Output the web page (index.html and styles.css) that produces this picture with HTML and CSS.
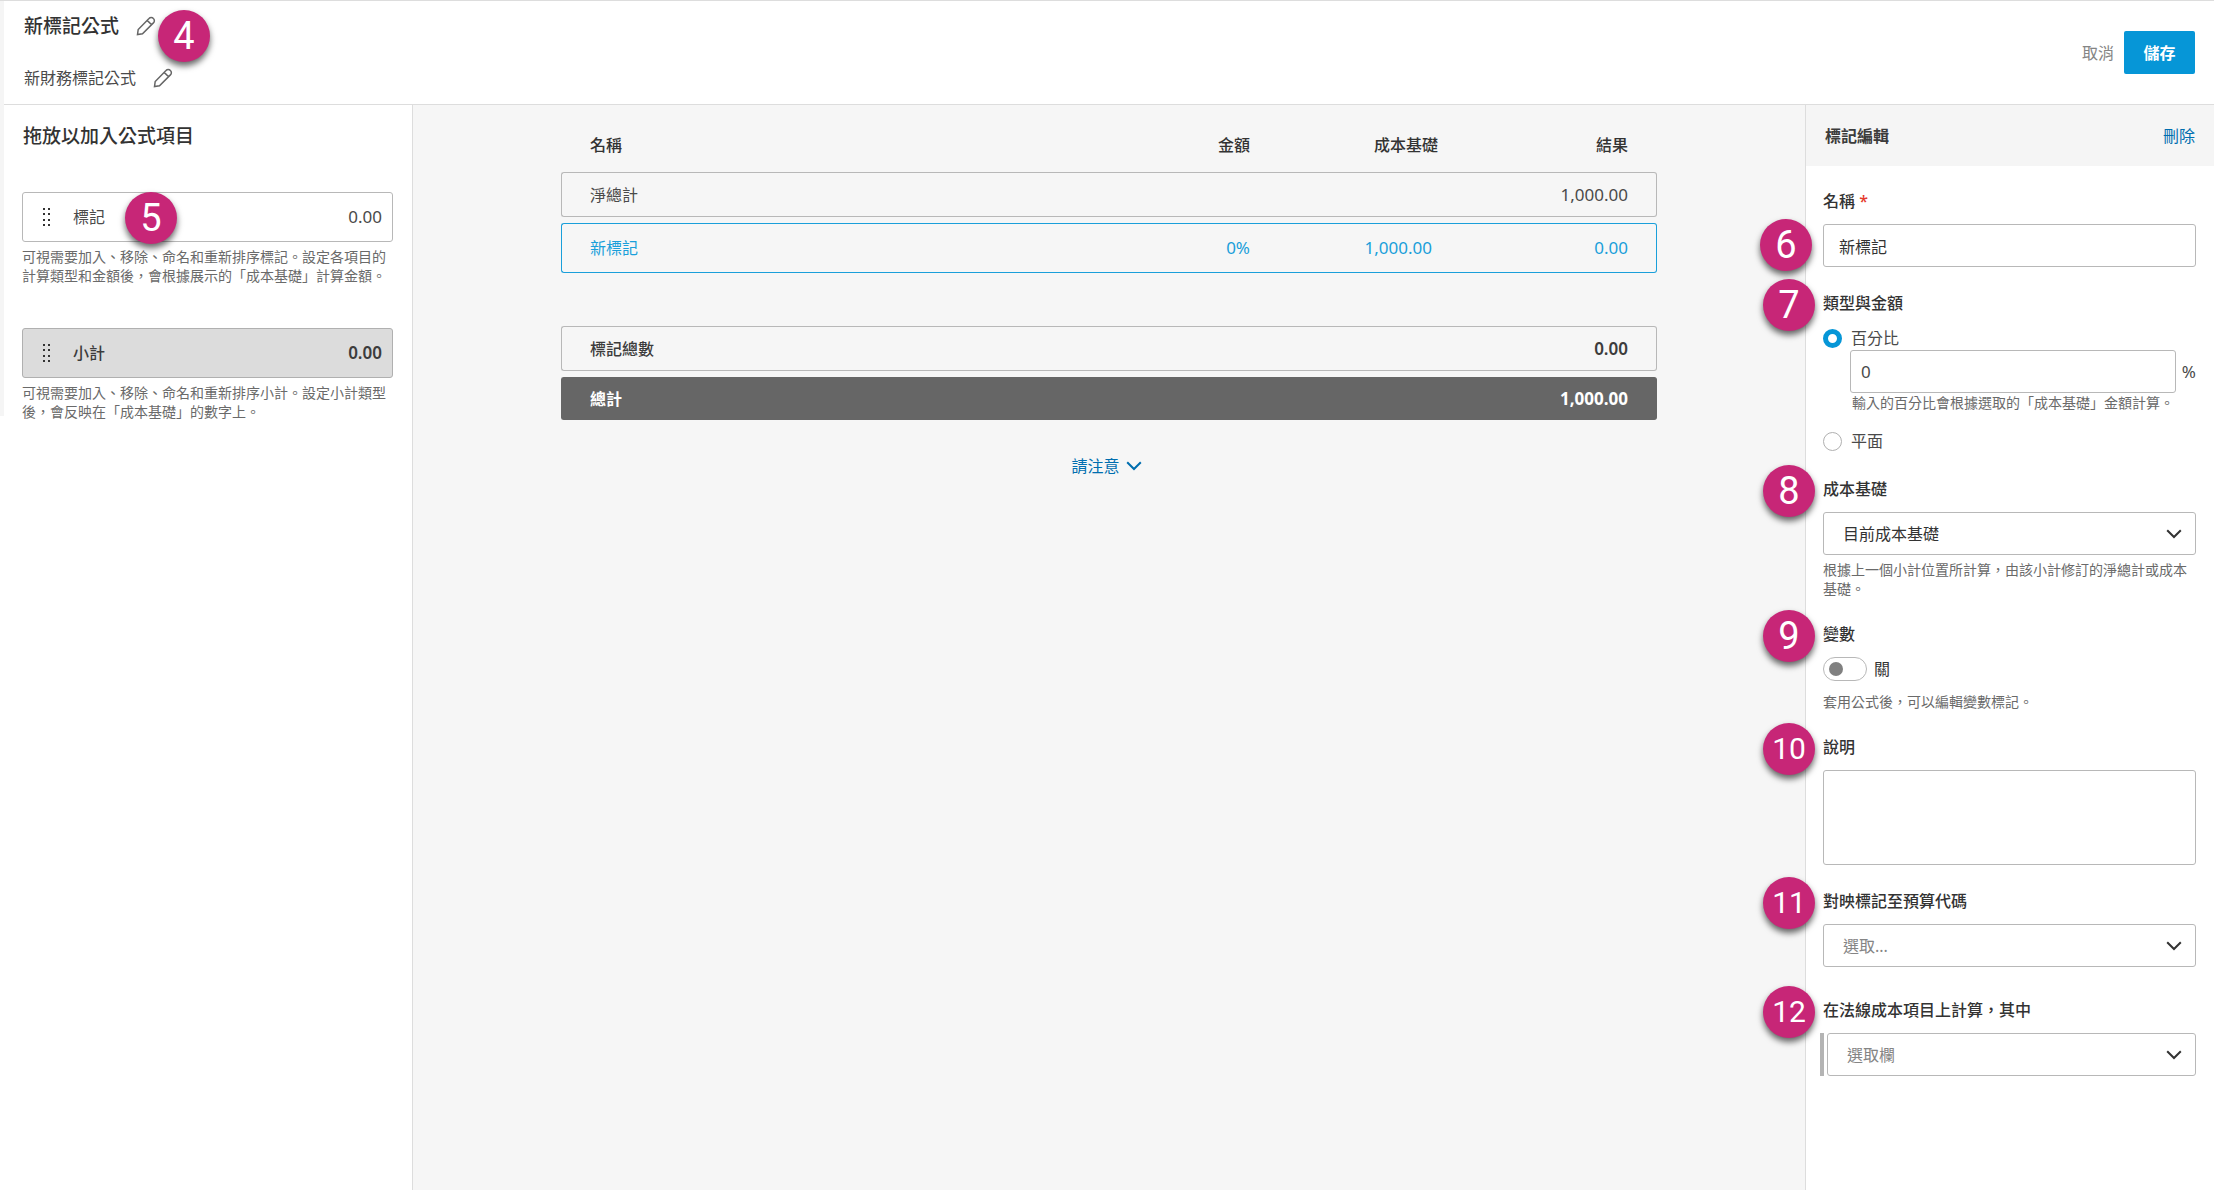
FILE: index.html
```html
<!DOCTYPE html>
<html lang="zh-Hant">
<head>
    <meta charset="UTF-8">
    <meta name="viewport" content="width=device-width, initial-scale=1.0">
    <title>新標記公式</title>
    <link rel="stylesheet" href="styles.css">
</head>
<body>
    <svg class="sprite" width="0" height="0" aria-hidden="true">
        <symbol id="icon-pencil" viewBox="0 0 20 20">
            <path d="M1.500 18.500 2.200 13.500 13 2.500a3 3 0 0 1 4.400 0 3 3 0 0 1 0 4.400L6.500 17.800ZM11.200 4.400l4.400 4.400" />
        </symbol>
        <symbol id="icon-chevron" viewBox="0 0 16 10">
            <path d="M1.200 1.200 8 8l6.800-6.800" />
        </symbol>
        <symbol id="icon-grip" viewBox="0 0 10 20">
            <path d="M1 1h2v2H1zM6 1h2v2H6zM1 6h2v2H1zM6 6h2v2H6zM1 12h2v2H1zM6 12h2v2H6zM1 17h2v2H1zM6 17h2v2H6z" />
        </symbol>
    </svg>

    <header class="page-header">
        <div class="titles">
            <div class="title-row">
                <h1>新標記公式</h1>
                <button type="button" class="icon-btn" aria-label="編輯名稱"><svg><use href="#icon-pencil" /></svg></button>
                <span class="badge badge-title">4</span>
            </div>
            <div class="title-row">
                <p>新財務標記公式</p>
                <button type="button" class="icon-btn" aria-label="編輯說明"><svg><use href="#icon-pencil" /></svg></button>
            </div>
        </div>
        <div class="actions">
            <button type="button" class="cancel-btn">取消</button>
            <button type="button" class="save-btn">儲存</button>
        </div>
    </header>

    <div class="columns">
        <aside class="items">
            <h2>拖放以加入公式項目</h2>
            <div class="item">
                <div class="item-card">
                    <svg class="grip"><use href="#icon-grip" /></svg>
                    <span>標記</span>
                    <span class="number">0.00</span>
                    <span class="badge badge-item">5</span>
                </div>
                <p class="help">可視需要加入、移除、命名和重新排序標記。設定各項目的計算類型和金額後，會根據展示的「成本基礎」計算金額。</p>
            </div>
            <div class="item">
                <div class="item-card subtotal">
                    <svg class="grip"><use href="#icon-grip" /></svg>
                    <span>小計</span>
                    <span class="number">0.00</span>
                </div>
                <p class="help">可視需要加入、移除、命名和重新排序小計。設定小計類型後，會反映在「成本基礎」的數字上。</p>
            </div>
        </aside>

        <main class="formula">
            <table>
                <thead>
                    <tr>
                        <th>名稱</th>
                        <th class="amount">金額</th>
                        <th class="basis">成本基礎</th>
                        <th class="result">結果</th>
                    </tr>
                </thead>
                <tbody>
                    <tr>
                        <td>淨總計</td>
                        <td></td>
                        <td></td>
                        <td class="number">1,000.00</td>
                    </tr>
                    <tr class="selected">
                        <td>新標記</td>
                        <td class="number">0%</td>
                        <td class="number">1,000.00</td>
                        <td class="number">0.00</td>
                    </tr>
                </tbody>
                <tfoot>
                    <tr class="spacer"><td colspan="4"></td></tr>
                    <tr class="total">
                        <td>標記總數</td>
                        <td></td>
                        <td></td>
                        <td class="number">0.00</td>
                    </tr>
                    <tr class="grand-total">
                        <td>總計</td>
                        <td></td>
                        <td></td>
                        <td class="number">1,000.00</td>
                    </tr>
                </tfoot>
            </table>
            <button type="button" class="note-btn">請注意 <svg class="chevron"><use href="#icon-chevron" /></svg></button>
        </main>

        <aside class="editor">
            <div class="editor-head">
                <h2>標記編輯</h2>
                <a href="#">刪除</a>
            </div>
            <form class="editor-form">
                <div class="field">
                    <label class="field-label" for="name">名稱 <span class="required">*</span></label>
                    <div class="control">
                        <input type="text" id="name" class="box name-box" value="新標記">
                        <span class="badge badge-name">6</span>
                    </div>
                </div>

                <fieldset class="field">
                    <legend class="field-label">類型與金額<span class="badge">7</span></legend>
                    <div class="radio-row">
                        <input type="radio" id="percent" name="type" checked>
                        <label for="percent">百分比</label>
                    </div>
                    <div class="percent">
                        <div class="percent-row">
                            <input type="text" class="box number" aria-label="百分比" value="0">
                            <span class="number">%</span>
                        </div>
                        <p class="help">輸入的百分比會根據選取的「成本基礎」金額計算。</p>
                    </div>
                    <div class="radio-row">
                        <input type="radio" id="flat" name="type">
                        <label for="flat">平面</label>
                    </div>
                </fieldset>

                <div class="field">
                    <label class="field-label" for="basis">成本基礎</label>
                    <span class="badge">8</span>
                    <div class="control">
                        <select id="basis" class="box">
                            <option>目前成本基礎</option>
                        </select>
                        <svg class="chevron"><use href="#icon-chevron" /></svg>
                    </div>
                    <p class="help basis-help">根據上一個小計位置所計算，由該小計修訂的淨總計或成本基礎。</p>
                </div>

                <div class="field">
                    <span class="field-label">變數</span>
                    <span class="badge">9</span>
                    <div class="switch-row">
                        <input type="checkbox" id="variable" class="switch">
                        <label for="variable">關</label>
                    </div>
                    <p class="help switch-help">套用公式後，可以編輯變數標記。</p>
                </div>

                <div class="field">
                    <label class="field-label" for="description">說明</label>
                    <span class="badge small">10</span>
                    <textarea id="description" class="box"></textarea>
                </div>

                <div class="field">
                    <label class="field-label" for="code">對映標記至預算代碼</label>
                    <span class="badge small">11</span>
                    <div class="control">
                        <select id="code" class="box placeholder">
                            <option>選取...</option>
                        </select>
                        <svg class="chevron"><use href="#icon-chevron" /></svg>
                    </div>
                </div>

                <div class="field condition">
                    <label class="field-label" for="column">在法線成本項目上計算，其中</label>
                    <span class="badge small">12</span>
                    <div class="control">
                        <select id="column" class="box placeholder">
                            <option>選取欄</option>
                        </select>
                        <svg class="chevron"><use href="#icon-chevron" /></svg>
                    </div>
                </div>
            </form>
        </aside>
    </div>
</body>
</html>
```

FILE: styles.css
```css
* {
    box-sizing: border-box;
}

body {
    margin: 0;
    min-height: 100vh;
    display: flex;
    flex-direction: column;
    font-family: "Noto Sans", "Noto Sans CJK TC", sans-serif;
    font-size: 16px;
    line-height: 24px;
    color: #4a4a4a;
    background: #fff linear-gradient(#f5f5f5, #f5f5f5) no-repeat 0 0 / 4px 416px;
    border-top: 1px solid #ddd;
}

h1,
h2,
p {
    margin: 0;
}

button,
input,
select,
textarea {
    font: inherit;
    color: inherit;
    margin: 0;
}

button {
    border: none;
    background: none;
    padding: 0;
    cursor: pointer;
}

svg {
    fill: none;
    stroke: currentColor;
}

.sprite {
    position: absolute;
}

.number {
    font-size: 17px;
}

.help {
    font-size: 14px;
    line-height: 19px;
    color: #6a6a6a;
}

.chevron {
    width: 16px;
    height: 10px;
    stroke-width: 2;
}

/* numbered callouts */
.badge {
    position: absolute;
    z-index: 1;
    top: -12px;
    left: -60px;
    width: 52px;
    height: 52px;
    border-radius: 50%;
    background: #c72677;
    box-shadow: 0 4px 6px rgba(0, 0, 0, 0.6);
    color: #fff;
    font-family: Roboto, Arial, sans-serif;
    font-size: 38px;
    font-weight: 400;
    line-height: 52px;
    text-align: center;
}

.badge.small {
    font-size: 30px;
}

/* header */
.page-header {
    display: flex;
    justify-content: space-between;
    align-items: center;
    height: 104px;
    margin-left: 4px;
    padding: 0 19px 0 20px;
    border-bottom: 1px solid #ddd;
}

.titles {
    display: flex;
    flex-direction: column;
    gap: 28px;
    padding-bottom: 2px;
}

.title-row {
    position: relative;
    display: flex;
    align-items: center;
    gap: 17px;
}

.title-row h1,
.items h2 {
    font-size: 19px;
    font-weight: 500;
    color: #333;
}

.icon-btn {
    height: 20px;
    color: #666;
}

.icon-btn svg {
    display: block;
    width: 20px;
    height: 20px;
    stroke-width: 1.5;
}

.badge-title {
    top: -4px;
    left: 134px;
}

.actions {
    display: flex;
    align-items: center;
    gap: 10px;
}

.cancel-btn {
    color: #858585;
}

.save-btn {
    width: 71px;
    height: 43px;
    border-radius: 2px;
    background: #0696d7;
    color: #fff;
    font-weight: 700;
}

/* three columns */
.columns {
    flex: 1;
    display: grid;
    grid-template-columns: 409px 1fr 409px;
    margin-left: 4px;
}

.items {
    padding: 19px 19px 19px 18px;
    border-right: 1px solid #ddd;
}

.items h2 {
    margin-bottom: 44px;
    padding-left: 1px;
}

.item {
    margin-bottom: 43px;
}

.item-card {
    position: relative;
    display: flex;
    align-items: center;
    height: 50px;
    margin-bottom: 5px;
    padding: 0 10px 0 19px;
    border: 1px solid #b8b8b8;
    border-radius: 3px;
}

.item-card .number {
    margin-left: auto;
}

.subtotal {
    background: #dcdcdc;
    border-color: #b0b0b0;
    color: #3c3c3c;
    font-weight: 500;
}

.subtotal .number {
    font-weight: 600;
}

.grip {
    width: 10px;
    height: 20px;
    margin-right: 21px;
    fill: #333;
    stroke: none;
}

.badge-item {
    top: -1px;
    left: 102px;
}

/* formula table */
.formula {
    padding: 22px 148px 0 148px;
    background: #f6f6f6;
    text-align: center;
}

table {
    width: 100%;
    table-layout: fixed;
    border-collapse: separate;
    border-spacing: 0 6px;
}

th {
    height: 33px;
    padding: 0 29px;
    font-weight: 500;
    color: #333;
    text-align: right;
    vertical-align: top;
}

th:first-child,
td:first-child {
    text-align: left;
}

th.amount {
    width: 150px;
    padding: 0 28px;
}

th.basis {
    width: 182px;
    padding: 0 22px;
}

th.result {
    width: 197px;
}

td {
    height: 45px;
    padding: 0 28px;
    border: solid #b8b8b8;
    border-width: 1px 0;
    text-align: right;
}

td:first-child {
    border-left-width: 1px;
    border-radius: 3px 0 0 3px;
}

td:last-child {
    border-right-width: 1px;
    border-radius: 0 3px 3px 0;
}

.selected td {
    height: 50px;
    border-color: #1a9fda;
    color: #1a9fda;
}

.spacer td {
    height: 41px;
    border: none;
}

.total td {
    color: #3c3c3c;
    font-weight: 500;
}

.total .number {
    font-weight: 600;
}

.grand-total td {
    height: 43px;
    border-color: #666;
    background: #666;
    color: #fff;
    font-weight: 700;
}

.note-btn {
    display: inline-flex;
    align-items: center;
    gap: 6px;
    margin-top: 28px;
    padding-right: 5px;
    color: #006eaf;
}

/* markup editor */
.editor {
    border-left: 1px solid #ddd;
}

.editor-head {
    display: flex;
    justify-content: space-between;
    align-items: center;
    height: 61px;
    padding: 0 19px;
    background: #f5f5f5;
}

.editor-head h2 {
    font-size: 16px;
    font-weight: 600;
    color: #3c3c3c;
}

.editor-head a {
    color: #006eaf;
    text-decoration: none;
}

.editor-form {
    display: flex;
    flex-direction: column;
    gap: 24px;
    padding: 23px 18px 24px 17px;
}

.field {
    position: relative;
    min-width: 0;
    margin: 0;
    padding: 0;
    border: none;
}

.field-label {
    display: block;
    position: relative;
    margin-bottom: 11px;
    padding: 0;
    font-weight: 500;
    color: #333;
}

.required {
    color: #e5392c;
}

.control {
    position: relative;
}

.badge-name {
    top: -5px;
    left: -63px;
}

.box {
    display: block;
    width: 100%;
    height: 43px;
    padding: 0 15px;
    border: 1px solid #b8b8b8;
    border-radius: 3px;
    background: #fff;
    outline: none;
}

select.box {
    appearance: none;
    padding: 0 40px 0 19px;
    color: #333;
}

select.placeholder {
    color: #858585;
}

textarea.box {
    height: 95px;
    padding: 8px 15px;
    resize: none;
}

.name-box {
    color: #333;
}

.control .chevron {
    position: absolute;
    top: 17px;
    right: 14px;
    color: #333;
    pointer-events: none;
}

.radio-row,
.switch-row {
    display: flex;
    align-items: center;
    gap: 9px;
    height: 24px;
}

.radio-row input {
    appearance: none;
    width: 19px;
    height: 19px;
    border: 1px solid #b0b0b0;
    border-radius: 50%;
}

.radio-row input:checked {
    border: 5px solid #0696d7;
}

.percent {
    margin: 0 0 17px 27px;
}

.percent-row {
    display: flex;
    align-items: center;
    gap: 6px;
}

.percent-row .box {
    flex: 1;
    min-width: 0;
    padding: 0 10px;
}

.percent .help {
    padding-left: 2px;
}

.basis-help {
    margin-top: 5px;
}

.switch-row {
    gap: 7px;
    color: #333;
}

.switch {
    appearance: none;
    width: 44px;
    height: 24px;
    padding: 4px 5px;
    border: 1px solid #b8b8b8;
    border-radius: 12px;
}

.switch::before {
    content: "";
    display: block;
    width: 14px;
    height: 14px;
    border-radius: 50%;
    background: #808080;
}

.switch:checked::before {
    margin-left: auto;
}

.switch-help {
    margin-top: 11px;
}

.condition {
    margin-top: 7px;
}

.condition .control {
    margin-left: -3px;
    padding-left: 3px;
    border-left: 4px solid #b4b4b4;
}
```
